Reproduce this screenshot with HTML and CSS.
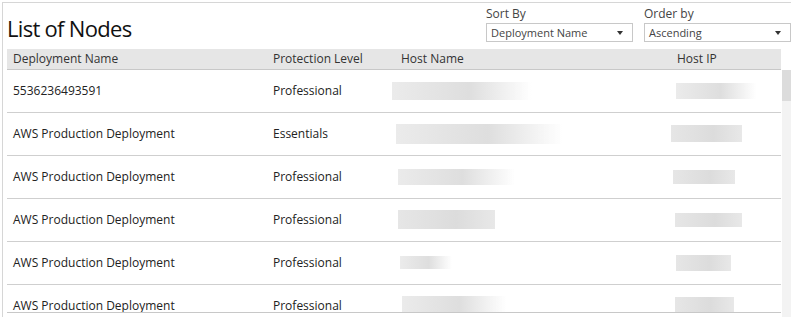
FILE: index.html
```html
<!DOCTYPE html>
<html lang="en">
<head>
    <meta charset="UTF-8">
    <meta name="viewport" content="width=device-width, initial-scale=1.0">
    <title>List of Nodes</title>
    <link rel="stylesheet" href="styles.css">
</head>
<body>

    <div class="panel">
        <div class="toolbar">
            <h2 class="title">List of Nodes</h2>

            <div class="filters">
                <div class="filter sort">
                    <label>Sort By</label>
                    <div class="select">Deployment Name<span class="caret"></span></div>
                </div>
                <div class="filter order">
                    <label>Order by</label>
                    <div class="select">Ascending<span class="caret"></span></div>
                </div>
            </div>
        </div>

        <div class="grid">
            <div class="grid-head">
                <div>Deployment Name</div>
                <div>Protection Level</div>
                <div>Host Name</div>
                <div>Host IP</div>
            </div>

            <div class="grid-wrap">
                <div class="grid-body">
                    <div class="row">
                        <div>5536236493591</div>
                        <div>Professional</div>
                        <div><span class="masked" style="margin-left:-9px;width:140px;height:18px"></span></div>
                        <div><span class="masked" style="margin-left:-1px;width:81px;height:16px"></span></div>
                    </div>
                    <div class="row">
                        <div>AWS Production Deployment</div>
                        <div>Essentials</div>
                        <div><span class="masked" style="margin-left:-5px;width:167px;height:20px"></span></div>
                        <div><span class="masked solid" style="margin-left:-6px;width:71px;height:17px"></span></div>
                    </div>
                    <div class="row">
                        <div>AWS Production Deployment</div>
                        <div>Professional</div>
                        <div><span class="masked" style="margin-left:-3px;width:117px;height:16px"></span></div>
                        <div><span class="masked solid" style="margin-left:-4px;width:62px;height:14px"></span></div>
                    </div>
                    <div class="row">
                        <div>AWS Production Deployment</div>
                        <div>Professional</div>
                        <div><span class="masked solid" style="margin-left:-3px;width:97px;height:19px"></span></div>
                        <div><span class="masked solid" style="margin-left:-2px;width:67px;height:14px"></span></div>
                    </div>
                    <div class="row">
                        <div>AWS Production Deployment</div>
                        <div>Professional</div>
                        <div><span class="masked" style="margin-left:-1px;width:52px;height:13px"></span></div>
                        <div><span class="masked solid" style="margin-left:-1px;width:55px;height:16px"></span></div>
                    </div>
                    <div class="row">
                        <div>AWS Production Deployment</div>
                        <div>Professional</div>
                        <div><span class="masked" style="margin-left:1px;width:104px;height:20px"></span></div>
                        <div><span class="masked solid" style="margin-left:-2px;width:59px;height:18px"></span></div>
                    </div>
                </div>
                <div class="scrollbar"><div class="thumb"></div></div>
            </div>
        </div>
    </div>

</body>
</html>
```

FILE: styles.css
```css
/* Page */
body {
    margin: 0;
    font-family: "Open Sans", Arial, sans-serif;
    color: #222;
    background: #fff;
    overflow: hidden;
    height: 317px;
}

/* Outer frame */
.panel {
    margin: 2px 0 0 2px;
    border-top: 1px solid #d6d6d6;
    border-left: 1px solid #d6d6d6;
    padding-left: 4px;
    height: 314px;
}

/* Title + sort controls */
.toolbar {
    display: flex;
    justify-content: space-between;
    height: 46px;
}

.title {
    margin: 10px 0 0 0;
    font-size: 22px;
    font-weight: normal;
    line-height: 30px;
    color: #111;
    letter-spacing: -0.7px;
}

.filters {
    display: flex;
    gap: 11px;
    padding-top: 3px;
}

.filter label {
    display: block;
    font-size: 12px;
    line-height: 16px;
    color: #444;
    margin-bottom: 1px;
}

.select {
    position: relative;
    box-sizing: border-box;
    height: 19px;
    border: 1px solid #c8c8c8;
    padding-left: 4px;
    font-size: 11px;
    line-height: 17px;
    color: #444;
}

.sort .select { width: 147px; }
.order .select { width: 147px; }

.caret {
    position: absolute;
    right: 9px;
    top: 7px;
    border-left: 3px solid transparent;
    border-right: 3px solid transparent;
    border-top: 4px solid #333;
}

/* Grid */
.grid {
    width: 784px;
}

.grid-head,
.row {
    display: grid;
    grid-template-columns: 260px 128px 276px 1fr;
    font-size: 12px;
}

.grid-head {
    width: 774px;
    height: 20px;
    line-height: 20px;
    background: #e6e6e6;
    border-bottom: 1px solid #c8c8c8;
    color: #333;
}

.grid-head > div,
.row > div {
    padding-left: 6px;
}

.grid-wrap {
    display: flex;
}

.grid-body {
    width: 774px;
    height: 242px;
    overflow: hidden;
    border-bottom: 1px solid #c8c8c8;
}

.row {
    box-sizing: border-box;
    height: 43px;
    padding-bottom: 1px;
    align-items: center;
    border-bottom: 1px solid #cfcfcf;
    color: #222;
}

.row > div {
    display: flex;
    align-items: center;
}

/* blurred values */
.masked {
    display: block;
    background: linear-gradient(90deg, #ebebeb 0%, #dedede 55%, #f4f4f4 85%, rgba(255,255,255,0) 100%);
    filter: blur(0.6px);
}

.masked.solid {
    background: linear-gradient(90deg, #e6e6e6 0%, #dcdcdc 60%, #e8e8e8 100%);
}

/* fake scrollbar */
.scrollbar {
    width: 9px;
    margin-left: 1px;
    height: 250px;
    background: #f3f3f3;
}

.thumb {
    height: 31px;
    background: #dcdcdc;
}
```
